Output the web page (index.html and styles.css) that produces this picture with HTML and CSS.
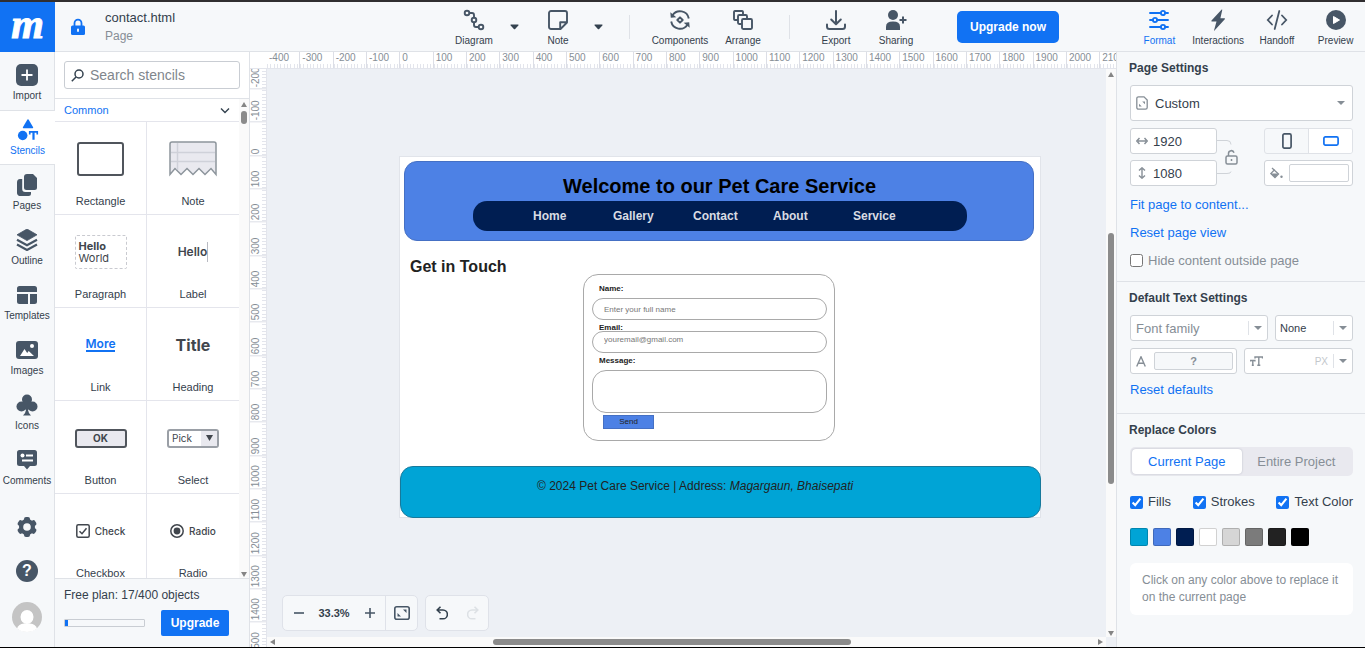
FILE: index.html
```
<!DOCTYPE html>
<html lang="en">
<head>
<meta charset="utf-8">
<title>contact.html</title>
<link rel="stylesheet" href="styles.css">
</head>
<body>
<div class="app">
  <header class="topbar">
    <a class="logo" href="#" aria-label="Home">m</a>
    <div class="doc">
      <svg class="lock" width="16" height="18" viewBox="0 0 16 18"><path d="M4.500 8V5.200a3.500 3.500 0 0 1 7 0V8" fill="none" stroke="#1172f3" stroke-width="1.800"/><rect x="1" y="7.500" width="14" height="9.500" rx="1.500" fill="#1172f3"/><path d="M8 11.500v1.500" stroke="#fff" stroke-width="1.800" stroke-linecap="round"/></svg>
      <div class="doc-text"><div class="doc-name">contact.html</div><div class="doc-kind">Page</div></div>
    </div>
    <div class="tools">
      <button class="tool"><svg class="i20" viewBox="0 0 20 20"><g fill="none" stroke="#475666" stroke-width="1.900"><circle cx="3" cy="3" r="2.300"/><circle cx="10" cy="10" r="2.300"/><circle cx="17" cy="17" r="2.300"/><path d="M5.300 3H8q2 0 2 2v2.700M10 12.300V15q0 2 2 2h2.700"/></g></svg>Diagram</button>
      <button class="more" aria-label="More diagram tools"><svg width="9" height="6" viewBox="0 0 9 6"><path d="M1 0.500h7q1 0 .3.900L5.200 5q-.7.700-1.400 0L.7 1.400Q0 .5 1 .5z" fill="#34424f"/></svg></button>
      <button class="tool gap-s"><svg class="i20" viewBox="0 0 20 20"><path d="M3 1h14a2 2 0 0 1 2 2v9.500L12.500 19H3a2 2 0 0 1-2-2V3a2 2 0 0 1 2-2zM12.200 18.500v-6.300h6.500" fill="none" stroke="#475666" stroke-width="1.900" stroke-linejoin="round"/></svg>Note</button>
      <button class="more" aria-label="More note tools"><svg width="9" height="6" viewBox="0 0 9 6"><path d="M1 0.500h7q1 0 .3.900L5.200 5q-.7.700-1.400 0L.7 1.400Q0 .5 1 .5z" fill="#34424f"/></svg></button>
      <span class="sep sep-wide"></span>
      <button class="tool"><svg class="i20" viewBox="0 0 20 20"><g fill="none" stroke="#475666" stroke-width="1.900"><path d="M2.500 5.200A9 9 0 0 1 18.800 8.500M1.200 11.500A9 9 0 0 0 17.500 14.800"/><path d="M10 7.300l2.700 2.700-2.700 2.700L7.300 10z" stroke-linejoin="round"/></g><path d="M.3 2.300l.5 5.500 5.500-.6zM19.700 17.700l-.5-5.500-5.500.6z" fill="#475666"/></svg>Components</button>
      <button class="tool gap-s"><svg class="i20" viewBox="0 0 20 20"><g fill="none" stroke="#475666" stroke-width="1.900" stroke-linejoin="round"><rect x="9" y="9" width="10" height="10" rx="1.200"/><path d="M8.500 14H6.200A1.200 1.200 0 0 1 5 12.800V6.200A1.200 1.200 0 0 1 6.200 5h6.600A1.200 1.200 0 0 1 14 6.200v2.300M4.500 10H2A1.200 1.200 0 0 1 1 9V2a1.200 1.200 0 0 1 1-1h7a1.200 1.200 0 0 1 1 1v2.500"/></g></svg>Arrange</button>
      <span class="sep"></span>
      <button class="tool"><svg class="i20" viewBox="0 0 20 20"><path d="M10 1v13M5.200 9.500L10 14.300l4.800-4.800M1 14.500v2Q1 19 3.500 19h13q2.500 0 2.500-2.500v-2" fill="none" stroke="#475666" stroke-width="2" stroke-linecap="round" stroke-linejoin="round"/></svg>Export</button>
      <button class="tool"><svg class="i22" viewBox="0 0 22 20"><g fill="#475666"><circle cx="8" cy="5" r="5"/><path d="M1 20v-3.500Q1 11.500 8 11.500t7 5V20z"/></g><path d="M18 6.500v7M14.500 10h7" stroke="#475666" stroke-width="2"/></svg>Sharing</button>
      <button class="cta">Upgrade now</button>
    </div>
    <nav class="modes">
      <button class="tool active"><svg class="i20" viewBox="0 0 20 20"><g fill="none" stroke="#1172f3" stroke-width="1.900" stroke-linecap="round"><path d="M1 3h10.500M16.500 3H19M1 10h2.500M8.500 10H19M1 17h10.500M16.500 17H19"/><circle cx="14" cy="3" r="2.100"/><circle cx="6" cy="10" r="2.100"/><circle cx="14" cy="17" r="2.100"/></g></svg>Format</button>
      <button class="tool"><svg class="i20" viewBox="0 0 20 20"><path d="M13.700-.5L3.500 10.500q-.6.900.4.900h4.600L6 20.500q0 .6.500.1L16.800 9.200q.6-.9-.4-.9h-4L14.300-.2q-.1-.6-.6-.3z" fill="#475666"/></svg>Interactions</button>
      <button class="tool"><svg class="i20" viewBox="0 0 20 20"><path d="M5 5.500L.8 10 5 14.500M15 5.500l4.200 4.500-4.200 4.500M12.300 1L7.700 19" fill="none" stroke="#475666" stroke-width="1.800" stroke-linecap="round"/></svg>Handoff</button>
      <button class="tool"><svg class="i20" viewBox="0 0 20 20"><circle cx="10" cy="10" r="10" fill="#475666"/><path d="M7.500 6.500v7L13.500 10z" fill="#fff" stroke="#fff" stroke-linejoin="round"/></svg>Preview</button>
    </nav>
  </header>

  <div class="body">
    <nav class="rail">
      <button class="rail-item"><svg viewBox="0 0 22 22"><rect width="22" height="22" rx="5" fill="#475666"/><path d="M11 5.500v11M5.500 11h11" stroke="#fff" stroke-width="1.800"/></svg>Import</button>
      <button class="rail-item current"><svg viewBox="0 0 22 24"><g fill="#1172f3"><path d="M10.200.8Q11 0 11.800.8L16.600 9q.3 1-.6 1H6q-.9 0-.6-1z"/><circle cx="5.200" cy="18" r="5.200"/><path d="M12 13h10v3.800h-1.800V15h-2v7.500h-2.400V15h-2v1.800H12z"/></g></svg>Stencils</button>
      <button class="rail-item"><svg viewBox="0 0 22 22"><path d="M11 0h6l4 4v9.500a2.500 2.500 0 0 1-2.500 2.500H10.500A2.500 2.500 0 0 1 8 13.500V3a3 3 0 0 1 3-3zM6.200 5v10a3 3 0 0 0 3 3H15v1.500a2.500 2.500 0 0 1-2.500 2.500h-8A3 3 0 0 1 1 19V8.500Q1 5 4 5z" fill="#475666"/></svg>Pages</button>
      <button class="rail-item"><svg viewBox="0 0 22 22"><path d="M11 0l10 5.800-10 5.800L1 5.800z" fill="#475666" stroke="#475666" stroke-width=".8" stroke-linejoin="round"/><path d="M1 10.800l10 5.400 10-5.400M1 15.500l10 5.500 10-5.500" fill="none" stroke="#475666" stroke-width="2.200"/></svg>Outline</button>
      <button class="rail-item"><svg viewBox="0 0 22 22"><path d="M3.500 2h15A2.500 2.500 0 0 1 21 4.500V8H1V4.500A2.500 2.500 0 0 1 3.500 2zM1 10h11v10H3.500A2.500 2.500 0 0 1 1 17.500zM14 10h7v7.500a2.500 2.500 0 0 1-2.500 2.500H14z" fill="#475666"/></svg>Templates</button>
      <button class="rail-item"><svg viewBox="0 0 22 22"><rect y="2" width="22" height="18" rx="3" fill="#475666"/><path d="M4 17l4.500-7 2.700 4 1.500-2L18 17z" fill="#fff"/><circle cx="16" cy="7" r="2" fill="#fff"/></svg>Images</button>
      <button class="rail-item"><svg viewBox="0 0 22 22"><g fill="#475666"><circle cx="11" cy="5.500" r="5"/><circle cx="5.500" cy="12.500" r="5"/><circle cx="16.500" cy="12.500" r="5"/><path d="M8 8h6v6l-2 2q.5 3.500 3 5.500H7q2.500-2 3-5.500l-2-2z"/></g></svg>Icons</button>
      <button class="rail-item"><svg viewBox="0 0 22 22"><path d="M3.500 1h15A2.500 2.500 0 0 1 21 3.500v11a2.500 2.500 0 0 1-2.500 2.500H14l-3 3.500L8 17H3.500A2.500 2.500 0 0 1 1 14.500v-11A2.500 2.500 0 0 1 3.500 1z" fill="#475666"/><circle cx="6.500" cy="6.500" r="2" fill="#fff"/><path d="M10 6.500h7M6 11.500h11" stroke="#fff" stroke-width="2"/></svg>Comments</button>
      <div class="rail-end">
        <button class="round" aria-label="Settings"><svg width="22" height="22" viewBox="0 0 22 22"><g fill="#475666"><circle cx="11" cy="11" r="8"/><rect x="8" y="1" width="6" height="20" rx="2"/><rect x="8" y="1" width="6" height="20" rx="2" transform="rotate(60 11 11)"/><rect x="8" y="1" width="6" height="20" rx="2" transform="rotate(120 11 11)"/></g><circle cx="11" cy="11" r="3.800" fill="#f6f8fa"/></svg></button>
        <button class="round help" aria-label="Help">?</button>
        <button class="round" aria-label="Account"><svg width="30" height="30" viewBox="0 0 30 30"><circle cx="15" cy="15" r="15" fill="#c4c4c4"/><ellipse cx="15" cy="15" rx="6.500" ry="7" fill="#fff"/><path d="M5 26.500q1.500-4.500 7-5h6q5.500.5 7 5-4 3.500-10 3.500t-10-3.500z" fill="#fff"/></svg></button>
      </div>
    </nav>

    <aside class="stencils">
      <label class="search"><svg width="13" height="13" viewBox="0 0 13 13"><circle cx="8" cy="5" r="4" fill="none" stroke="#34424f" stroke-width="1.500"/><path d="M5 8L.8 12.200" stroke="#34424f" stroke-width="1.500"/></svg><input type="text" placeholder="Search stencils" aria-label="Search stencils"></label>
      <div class="library">
        <div class="list">
          <button class="group">Common<svg width="10" height="7" viewBox="0 0 10 7"><path d="M1 1.500l4 4 4-4" fill="none" stroke="#34424f" stroke-width="1.400"/></svg></button>
          <div class="cells">
            <div class="cell"><div class="thumb"><span class="t-rect"></span></div>Rectangle</div>
            <div class="cell"><div class="thumb"><svg width="48" height="36" viewBox="0 0 48 36"><path d="M1 33.500V3a2 2 0 0 1 2-2h42a2 2 0 0 1 2 2v30.500l-5-6-6 6-6-6-6 6-6-6-6 6-6-6z" fill="#e9e9ef" stroke="#8d959c" stroke-width="1.500"/><path d="M8.500 2v27M2 11.500h44M2 20.500h44" stroke="#cfd1d9" stroke-width="1.500"/></svg></div>Note</div>
            <div class="cell"><div class="thumb"><span class="t-para"><b>Hello</b><br>World</span></div>Paragraph</div>
            <div class="cell"><div class="thumb"><span class="t-label">Hello</span></div>Label</div>
            <div class="cell"><div class="thumb"><span class="t-link">More</span></div>Link</div>
            <div class="cell"><div class="thumb"><span class="t-title">Title</span></div>Heading</div>
            <div class="cell"><div class="thumb"><span class="t-btn">OK</span></div>Button</div>
            <div class="cell"><div class="thumb"><span class="t-select"><span>Pick</span><i><svg width="7" height="6" viewBox="0 0 7 6"><path d="M0 0h7L3.500 6z" fill="#41464d"/></svg></i></span></div>Select</div>
            <div class="cell"><div class="thumb t-opt"><svg width="14" height="14" viewBox="0 0 14 14"><rect x=".8" y=".8" width="12.400" height="12.400" rx="1.500" fill="#fff" stroke="#41464d" stroke-width="1.500"/><path d="M3.500 7.200L6 9.700l4.500-5.500" fill="none" stroke="#41464d" stroke-width="1.500"/></svg>Check</div>Checkbox</div>
            <div class="cell"><div class="thumb t-opt"><svg width="14" height="14" viewBox="0 0 14 14"><circle cx="7" cy="7" r="6.200" fill="#fff" stroke="#41464d" stroke-width="1.500"/><circle cx="7" cy="7" r="3.400" fill="#41464d"/></svg>Radio</div>Radio</div>
          </div>
        </div>
        <div class="scroll-v"><i class="arrow up"></i><i class="thumb-short"></i><i class="arrow down"></i></div>
      </div>
      <div class="plan">
        <div>Free plan: 17/400 objects</div>
        <div class="plan-row"><div class="meter"><div style="width:4%"></div></div><button class="upgrade">Upgrade</button></div>
      </div>
    </aside>

    <main class="workspace">
      <div class="corner"></div>
      <div class="ruler-x"><div class="track-x"><span>-400</span><span>-300</span><span>-200</span><span>-100</span><span>0</span><span>100</span><span>200</span><span>300</span><span>400</span><span>500</span><span>600</span><span>700</span><span>800</span><span>900</span><span>1000</span><span>1100</span><span>1200</span><span>1300</span><span>1400</span><span>1500</span><span>1600</span><span>1700</span><span>1800</span><span>1900</span><span>2000</span><span>2100</span></div></div>
      <div class="ruler-y"><div class="track-y"><span>-200</span><span>-100</span><span>0</span><span>100</span><span>200</span><span>300</span><span>400</span><span>500</span><span>600</span><span>700</span><span>800</span><span>900</span><span>1000</span><span>1100</span><span>1200</span><span>1300</span><span>1400</span><span>1500</span></div></div>
      <div class="canvas">
        <div class="page">
          <div class="p-header"></div>
          <h1 class="p-title">Welcome to our Pet Care Service</h1>
          <nav class="p-nav"><a href="#">Home</a><a href="#">Gallery</a><a href="#">Contact</a><a href="#">About</a><a href="#">Service</a></nav>
          <h2 class="p-sub">Get in Touch</h2>
          <form class="p-form">
            <label for="f-name">Name:</label>
            <input id="f-name" type="text" placeholder="Enter your full name">
            <label for="f-mail">Email:</label>
            <input id="f-mail" class="mail" type="text" placeholder="youremail@gmail.com">
            <label for="f-msg">Message:</label>
            <textarea id="f-msg"></textarea>
            <button type="button">Send</button>
          </form>
          <footer class="p-footer">© 2024 Pet Care Service | Address: <em>Magargaun, Bhaisepati</em></footer>
        </div>
        <div class="dock">
          <div class="dock-box">
            <button aria-label="Zoom out"><svg width="10" height="10" viewBox="0 0 10 10"><path d="M0 5h10" stroke="#475666" stroke-width="1.600"/></svg></button>
            <span class="zoom">33.3%</span>
            <button aria-label="Zoom in"><svg width="10" height="10" viewBox="0 0 10 10"><path d="M0 5h10M5 0v10" stroke="#475666" stroke-width="1.600"/></svg></button>
            <button class="fit" aria-label="Fit to screen"><svg width="16" height="14" viewBox="0 0 16 14"><rect x=".8" y=".8" width="14.400" height="12.400" rx="2" fill="none" stroke="#475666" stroke-width="1.600"/><path d="M9 3.500h3.500V7zM3.500 7v3.500H7z" fill="#475666"/></svg></button>
          </div>
          <div class="dock-box">
            <button aria-label="Undo"><svg width="12" height="14" viewBox="0 0 12 14"><path d="M4.500.8L1.200 4l3.300 3.200M1.500 4H7a4.300 4.300 0 0 1 0 8.800H3.500" fill="none" stroke="#34424f" stroke-width="1.600"/></svg></button>
            <button aria-label="Redo"><svg width="12" height="14" viewBox="0 0 12 14"><path d="M7.500.8L10.800 4 7.500 7.200M10.500 4H5a4.300 4.300 0 0 0 0 8.800h3.500" fill="none" stroke="#dde1e5" stroke-width="1.600"/></svg></button>
          </div>
        </div>
      </div>
      <div class="scroll-v main-v"><i class="arrow up"></i><i class="bar-v"></i><i class="arrow down"></i></div>
      <div class="scroll-h"><i class="arrow left"></i><i class="bar-h"></i><i class="arrow right"></i></div>
    </main>

    <aside class="props">
      <section>
        <h3>Page Settings</h3>
        <div class="field tall"><svg width="12" height="14" viewBox="0 0 12 14"><path d="M2.500.8H8l3.200 3.200v7.500a1.700 1.700 0 0 1-1.700 1.700h-7A1.700 1.700 0 0 1 .8 11.500v-9A1.700 1.700 0 0 1 2.500.8z" fill="none" stroke="#868e96" stroke-width="1.300"/><path d="M6.200 5.500H9v2.800zM3 7.700v2.800h2.800z" fill="#868e96"/></svg><select class="custom" aria-label="Page size"><option>Custom</option></select><i class="caret"></i></div>
        <div class="size-row">
          <div class="sizes">
            <label class="field"><svg width="12" height="8" viewBox="0 0 12 8"><path d="M2 4h8M3.500 1L.8 4l2.700 3M8.500 1l2.700 3-2.700 3" fill="none" stroke="#868e96" stroke-width="1.400"/></svg><input type="text" value="1920" aria-label="Width"></label>
            <label class="field"><svg width="12" height="12" viewBox="0 0 12 12"><path d="M6 2v8M3 3.500L6 .8l3 2.700M3 8.500l3 2.700 3-2.700" fill="none" stroke="#868e96" stroke-width="1.400"/></svg><input type="text" value="1080" aria-label="Height"></label>
          </div>
          <svg class="link" width="22" height="36" viewBox="0 0 22 36"><path d="M0 1.500h10q4 0 4 4M0 34.500h10q4 0 4-2" fill="none" stroke="#cfd3d8"/><rect x="9" y="17" width="11" height="8" rx="1.500" fill="none" stroke="#868e96" stroke-width="1.500"/><path d="M11.500 17v-2.500a2.800 2.800 0 0 1 5.500-.8M14.500 20v2" fill="none" stroke="#868e96" stroke-width="1.500"/></svg>
          <div class="looks">
            <div class="orient"><button aria-label="Portrait"><svg width="10" height="16" viewBox="0 0 10 16"><rect x=".9" y=".9" width="8.200" height="14.200" rx="1.500" fill="none" stroke="#475666" stroke-width="1.700"/></svg></button><button class="on" aria-label="Landscape"><svg width="16" height="10" viewBox="0 0 16 10"><rect x=".9" y=".9" width="14.200" height="8.200" rx="1.500" fill="none" stroke="#1172f3" stroke-width="1.700"/></svg></button></div>
            <div class="field fill"><svg width="13" height="12" viewBox="0 0 13 12"><path d="M2 1l6.500 6L5 10.500.8 6.500 4.800 2.500" fill="none" stroke="#868e96" stroke-width="1.300"/><path d="M1 6.500h7.500L5 10.500z" fill="#868e96"/><circle cx="11.500" cy="9.800" r="1.200" fill="#868e96"/></svg><button class="well" aria-label="Page fill"></button></div>
          </div>
        </div>
        <a class="act" href="#">Fit page to content...</a>
        <a class="act" href="#">Reset page view</a>
        <label class="check muted"><input type="checkbox">Hide content outside page</label>
      </section>
      <section>
        <h3>Default Text Settings</h3>
        <div class="row">
          <div class="field grow-l"><select class="dim" aria-label="Font family"><option>Font family</option></select><i class="caret split"></i></div>
          <div class="field w-s"><select class="small" aria-label="Font style"><option>None</option></select><i class="caret split"></i></div>
        </div>
        <div class="row">
          <div class="field half"><svg width="10" height="11" viewBox="0 0 10 11"><path d="M.7 10.500L5 .8l4.300 9.700M2.300 7.300h5.400" fill="none" stroke="#868e96" stroke-width="1.400"/></svg><button class="well gray">?</button></div>
          <label class="field half"><svg width="13" height="10" viewBox="0 0 13 10"><path d="M5 2.500V1h7.500v1.500M8.800 1v8.500M7.300 9.300h3M.6 5.500V4.500h4.300v1M2.800 4.500v5M1.800 9.300h2" fill="none" stroke="#868e96" stroke-width="1.400"/></svg><input type="text" aria-label="Font size"><span class="unit">PX</span><i class="caret split"></i></label>
        </div>
        <a class="act" href="#">Reset defaults</a>
      </section>
      <section>
        <h3>Replace Colors</h3>
        <div class="segment"><button class="on">Current Page</button><button>Entire Project</button></div>
        <div class="checks"><label class="check"><input type="checkbox" checked>Fills</label><label class="check"><input type="checkbox" checked>Strokes</label><label class="check"><input type="checkbox" checked>Text Color</label></div>
        <div class="swatches"><button class="c1" aria-label="Cyan"></button><button class="c2" aria-label="Blue"></button><button class="c3" aria-label="Navy"></button><button class="c4" aria-label="White"></button><button class="c5" aria-label="Light gray"></button><button class="c6" aria-label="Gray"></button><button class="c7" aria-label="Charcoal"></button><button class="c8" aria-label="Black"></button></div>
        <p class="hint">Click on any color above to replace it on the current page</p>
      </section>
    </aside>
  </div>
</div>
</body>
</html>
```

FILE: styles.css
```
* { box-sizing: border-box; }
:root {
  --blue: #1172f3;
  --ink: #34404c;
  --icon: #475666;
  --gray: #868e96;
  --line: #dfe2e7;
  --bg: #f6f8fa;
  --unit: calc(100px / 3);
}
body {
  margin: 0;
  font-family: "Liberation Sans", Arial, sans-serif;
  font-size: 13px;
  color: var(--ink);
}
button, input, select, textarea { font: inherit; color: inherit; margin: 0; padding: 0; border: 0; background: none; outline: 0; }
button { cursor: pointer; }
select { appearance: none; }
svg { display: block; flex: none; }
.app {
  display: flex;
  flex-direction: column;
  height: 100vh;
  border-top: 2px solid #302e30;
  border-bottom: 1px solid #000;
  background: var(--bg);
  overflow: hidden;
}

/* Top bar */
.topbar { display: flex; flex: none; height: 50px; border-bottom: 1px solid var(--line); }
.logo {
  width: 55px;
  height: 50px;
  background: var(--blue);
  color: #fff;
  font: italic bold 42px/44px "Liberation Serif", serif;
  -webkit-text-stroke: 1px #fff;
  text-align: center;
  text-decoration: none;
}
.doc { display: flex; flex: 1; align-items: center; gap: 19px; padding-left: 15px; }
.doc-name { font-size: 13px; line-height: 19px; }
.doc-kind { font-size: 12px; line-height: 19px; color: var(--gray); }
.tools { display: flex; align-items: center; margin-right: 57px; }
.tool { display: flex; flex-direction: column; align-items: center; gap: 5px; width: 60px; font-size: 10px; line-height: 12px; padding-top: 4px; }
.tool.active { color: var(--blue); }
.i20 { width: 20px; height: 20px; overflow: visible; }
.i22 { width: 22px; height: 20px; }
.more { display: flex; justify-content: center; width: 21px; }
.gap-s { margin-left: 3px; }
.sep { width: 1px; height: 24px; margin: 0 16px; background: var(--line); }
.sep-wide { margin: 0 20px; }
.cta { width: 102px; height: 32px; margin-left: 31px; border-radius: 5px; background: var(--blue); color: #fff; font-size: 12px; font-weight: bold; }
.modes { display: flex; width: 249px; padding-left: 14px; }
.modes .tool { flex: 1; justify-content: center; }

.body { display: flex; flex: 1; min-height: 0; }

/* Icon rail */
.rail { display: flex; flex: none; flex-direction: column; width: 55px; padding-top: 3px; border-right: 1px solid var(--line); }
.rail-item { display: flex; flex: none; flex-direction: column; align-items: center; gap: 4px; height: 55px; padding-top: 9px; font-size: 10px; line-height: 12px; }
.rail-item svg { width: 22px; height: 22px; }
.rail-item.current { margin-right: -1px; padding-top: 8px; background: #fff; border: solid var(--line); border-width: 1px 0; color: var(--blue); }
.rail-end { display: flex; flex-direction: column; align-items: center; gap: 20px; margin-top: auto; padding-bottom: 15px; }
.round { display: block; }
.help { width: 22px; height: 22px; margin-top: 2px; border-radius: 50%; background: var(--icon); color: #fff; font-weight: bold; font-size: 16px; line-height: 22px; }

/* Stencil panel */
.stencils { display: flex; flex: none; flex-direction: column; width: 195px; border-right: 1px solid var(--line); background: #fff; }
.search { display: flex; flex: none; align-items: center; gap: 6px; height: 28px; margin: 9px; padding: 0 6px; border: 1px solid #c9cdd3; border-radius: 3px; }
.search input { flex: 1; min-width: 0; font-size: 14px; }
.search input::placeholder { color: #7f868c; opacity: 1; }
.library { display: flex; flex: 1; min-height: 0; border-top: 1px solid var(--line); }
.list { flex: 1; overflow: hidden; }
.group { display: flex; align-items: center; justify-content: space-between; width: 100%; height: 23px; padding: 0 9px; border-bottom: 1px solid #e4e5ec; font-size: 11px; color: var(--blue); }
.cells { display: grid; grid-template-columns: 1fr 1fr; }
.cell { display: flex; flex-direction: column; align-items: center; gap: 13px; height: 93px; border-bottom: 1px solid #e4e5ec; font-size: 11px; line-height: 14px; }
.cell:nth-child(odd) { border-right: 1px solid #e4e5ec; }
.thumb { display: flex; align-items: center; justify-content: center; height: 44px; margin-top: 15px; font-family: Inter, sans-serif; color: #41464d; }
.t-rect { width: 47px; height: 34px; border: 2px solid #50555c; border-radius: 3px; }
.t-para { width: 52px; padding: 4px 3px; border: 1px dashed #c9cad0; border-radius: 2px; font-size: 11px; line-height: 12px; }
.t-label { border-right: 1px solid #b8bac2; font-size: 12px; font-weight: 600; line-height: 20px; }
.t-link { border-bottom: 2px solid var(--blue); color: var(--blue); font-size: 12px; font-weight: 600; line-height: 12px; }
.t-title { font-size: 16px; font-weight: 700; }
.t-btn { width: 52px; height: 19px; border: 2px solid #50555c; border-radius: 3px; background: #e9e9ef; font-size: 10px; font-weight: 700; line-height: 15px; text-align: center; }
.t-select { display: flex; width: 52px; height: 19px; border: 2px solid #9a9fa6; border-radius: 3px; font-size: 10px; line-height: 15px; }
.t-select span { flex: 1; padding-left: 3px; }
.t-select i { display: flex; align-items: center; justify-content: center; width: 16px; background: #e9e9ef; }
.t-opt { gap: 5px; font-size: 10px; font-weight: 500; }
.plan { flex: none; height: 69px; padding: 9px; border-top: 1px solid var(--line); background: var(--bg); font-size: 12px; line-height: 14px; }
.plan-row { display: flex; align-items: center; gap: 16px; margin-top: 8px; }
.meter { width: 81px; height: 8px; border: 1px solid #c9cdd3; border-radius: 1px; background: var(--bg); }
.meter div { height: 100%; background: var(--blue); }
.upgrade { width: 68px; height: 26px; border-radius: 2px; background: var(--blue); color: #fff; font-weight: bold; }

/* Scroll bars */
.scroll-v { display: flex; flex: none; flex-direction: column; align-items: center; width: 10px; padding: 3px 0 1px; background: #fafafa; }
.arrow { width: 0; height: 0; border: 3px solid transparent; }
.up { border-top: 0; border-bottom: 5px solid #858585; }
.down { border-bottom: 0; border-top: 5px solid #858585; margin-top: auto; }
.left { border-left: 0; border-right: 5px solid #858585; }
.right { border-right: 0; border-left: 5px solid #858585; margin-left: auto; }
.thumb-short { width: 6px; height: 13px; margin-top: 4px; border-radius: 3px; background: #8b8b8b; }

/* Workspace */
.workspace { display: grid; flex: 1; min-width: 0; grid-template: 17px 1fr 10px / 17px 1fr 10px; background: #edf0f5; }
.corner { background: #fff; border: solid #e3e5ec; border-width: 0 0 1px; }
.ruler-x { grid-column: 2 / 4; overflow: hidden; border-bottom: 1px solid #e3e5ec; background: #fff; }
.track-x, .track-y { display: flex; font-size: 10px; color: var(--gray); }
.track-x { height: 16px; margin-left: -1px; }
.track-x span {
  flex: none;
  width: var(--unit);
  padding-left: 2px;
  border-left: 1px solid #dcdee6;
  line-height: 12px;
  background: repeating-linear-gradient(to right, #e3e5ec 0 1px, transparent 1px calc(var(--unit) / 10)) 0 100% / 100% 4px no-repeat;
}
.ruler-y { grid-row: 2 / 4; overflow: hidden; border-right: 1px solid #e3e5ec; background: #fff; }
.track-y { flex-direction: column; margin-top: -13px; }
.track-y span {
  flex: none;
  width: 16px;
  height: var(--unit);
  padding-top: 1px;
  border-top: 1px solid #dcdee6;
  line-height: 12px;
  writing-mode: vertical-rl;
  transform: rotate(180deg);
  background: repeating-linear-gradient(to bottom, #e3e5ec 0 1px, transparent 1px calc(var(--unit) / 10)) 0 0 / 4px 100% no-repeat;
}
.canvas { position: relative; overflow: hidden; }
.main-v { grid-area: 2 / 3; }
.bar-v { flex: none; width: 6px; height: 251px; margin-top: 156px; border-radius: 3px; background: #8b8b8b; }
.scroll-h { display: flex; grid-area: 3 / 2; align-items: center; padding: 0 3px; background: #fafafa; }
.bar-h { width: 358px; height: 6px; margin-left: 218px; border-radius: 3px; background: #8b8b8b; }
.dock { position: absolute; left: 15px; bottom: 6px; display: flex; gap: 7px; }
.dock-box { display: flex; align-items: center; height: 36px; border: 1px solid #dfe2e9; border-radius: 5px; background: var(--bg); }
.dock-box button { display: flex; align-items: center; justify-content: center; width: 31px; height: 34px; }
.dock-box .zoom { width: 40px; font-size: 11px; font-weight: bold; text-align: center; }
.dock-box .fit { width: 32px; border-left: 1px solid #dfe2e9; }

/* Artboard: objects sit at their canvas coordinates */
.page { position: absolute; left: 133px; top: 88px; width: 640px; height: 360px; background: #fff; outline: 1px solid #e1e4ea; color: #222; }
.page > * { position: absolute; margin: 0; }
.p-header { left: 4px; top: 4px; width: 630px; height: 80px; border: 1px solid #4570c4; border-radius: 13px; background: #4d81e5; }
.p-title { left: 163px; top: 17px; font-size: 20px; line-height: 24px; color: #000; white-space: nowrap; }
.p-nav { display: flex; left: 73px; top: 44px; width: 494px; height: 30px; padding-left: 60px; border-radius: 14px; background: #001e52; align-items: center; }
.p-nav a { width: 80px; color: #d9dce3; font-size: 12px; font-weight: bold; text-decoration: none; }
.p-sub { left: 10px; top: 100px; font-size: 16px; line-height: 20px; }
.p-form { display: flex; flex-direction: column; left: 183px; top: 117px; width: 252px; height: 167px; padding: 9px 7px 0 8px; border: 1px solid #a9a9a9; border-radius: 15px; font-size: 8px; line-height: 10px; }
.p-form label { padding-left: 7px; font-weight: bold; }
.p-form input { flex: none; height: 22px; margin: 4px 0 3px; padding: 0 11px; border: 1px solid #a9a9a9; border-radius: 11px; background: #fff; }
.p-form input::placeholder { color: #777; opacity: 1; }
.p-form .mail { margin-top: -2px; padding-bottom: 5px; }
.p-form textarea { flex: none; height: 43px; margin: 4px 0 2px; border: 1px solid #a9a9a9; border-radius: 14px; resize: none; background: #fff; }
.p-form button { width: 51px; height: 14px; margin-left: 11px; border: 1px solid #4570c4; background: #4d81e5; }
.p-footer { left: 0; top: 309px; width: 641px; height: 52px; padding: 11px 0 0 136px; border: 1px solid #17799b; border-radius: 13px; background: #00a4d6; font-size: 12px; line-height: 16px; white-space: nowrap; }

/* Properties */
.props { flex: none; width: 249px; border-left: 1px solid var(--line); overflow: hidden; }
.props section { display: flex; flex-direction: column; padding: 8px 12px 14px 13px; border-bottom: 1px solid var(--line); }
.props section:last-child { border: 0; }
.props h3 { margin: 0 0 9px -1px; font-size: 12px; line-height: 16px; }
.field { display: flex; align-items: center; height: 26px; border: 1px solid #cfd3d8; border-radius: 3px; background: #fff; padding: 0 5px; }
.field select, .field input { flex: 1; min-width: 0; }
.tall { height: 36px; gap: 7px; padding-right: 7px; }
.tall .caret { padding: 0; }
.caret { flex: none; display: flex; align-items: center; justify-content: center; }
.caret::before { content: ""; border: solid transparent; border-width: 4px 4px 0; border-top-color: var(--gray); }
.split { width: 18px; height: 14px; margin-right: -4px; border-left: 1px solid var(--line); }
.size-row { display: flex; align-items: center; margin-top: 7px; }
.sizes { display: flex; flex-direction: column; gap: 6px; width: 87px; }
.sizes .field { gap: 5px; }
.link { margin-right: auto; }
.looks { display: flex; flex-direction: column; gap: 6px; width: 89px; }
.orient { display: flex; height: 26px; border: 1px solid var(--line); border-radius: 3px; overflow: hidden; }
.orient button { display: flex; flex: 1; align-items: center; justify-content: center; }
.orient .on { border-left: 1px solid var(--line); background: #fff; }
.fill { gap: 6px; padding-right: 3px; }
.well { flex: 1; height: 18px; border: 1px solid #cfd3d8; border-radius: 2px; background: #fff; }
.gray { background: var(--bg); color: var(--gray); font-size: 11px; font-weight: bold; }
.act { align-self: flex-start; margin-top: 10px; color: var(--blue); line-height: 17px; text-decoration: none; }
.act + .act { margin-top: 11px; }
.check { display: flex; align-items: center; gap: 5px; }
.check input { width: 13px; height: 13px; accent-color: var(--blue); }
.muted { margin-top: 11px; height: 17px; color: var(--gray); margin-bottom: -2px; }
.row { display: flex; gap: 7px; margin-bottom: 7px; }
.row + .act { margin: 0 0 1px; }
.grow-l { flex: 1; }
.w-s { width: 78px; padding-left: 4px; }
.half { flex: 1; min-width: 0; gap: 8px; padding-right: 3px; }
label.half { gap: 5px; padding-right: 5px; }
.dim { color: var(--gray); }
.small { font-size: 11px; }
.unit { color: #c3c7cc; font-size: 10px; }
.segment { display: flex; height: 29px; padding: 2px; border-radius: 5px; background: #e9e9ef; }
.segment button { flex: 1; border-radius: 4px; color: var(--gray); }
.segment .on { background: #fff; color: var(--blue); box-shadow: 0 0 2px #b4b7c2; }
.checks { display: flex; justify-content: space-between; margin-top: 18px; line-height: 16px; }
.swatches { display: flex; gap: 5px; margin-top: 18px; }
.swatches button { width: 18px; height: 18px; border: 1px solid rgba(0, 0, 0, .18); border-radius: 2px; }
.c1 { background: #00a4d6; }
.c2 { background: #4d81e5; }
.c3 { background: #001e52; }
.c4 { background: #fff; }
.c5 { background: #d6d6d6; }
.c6 { background: #7b7b7b; }
.c7 { background: #222; }
.c8 { background: #000; }
.hint { margin: 17px 0 0; padding: 9px 12px; border-radius: 6px; background: #fff; color: var(--gray); font-size: 12px; line-height: 17px; }
```
